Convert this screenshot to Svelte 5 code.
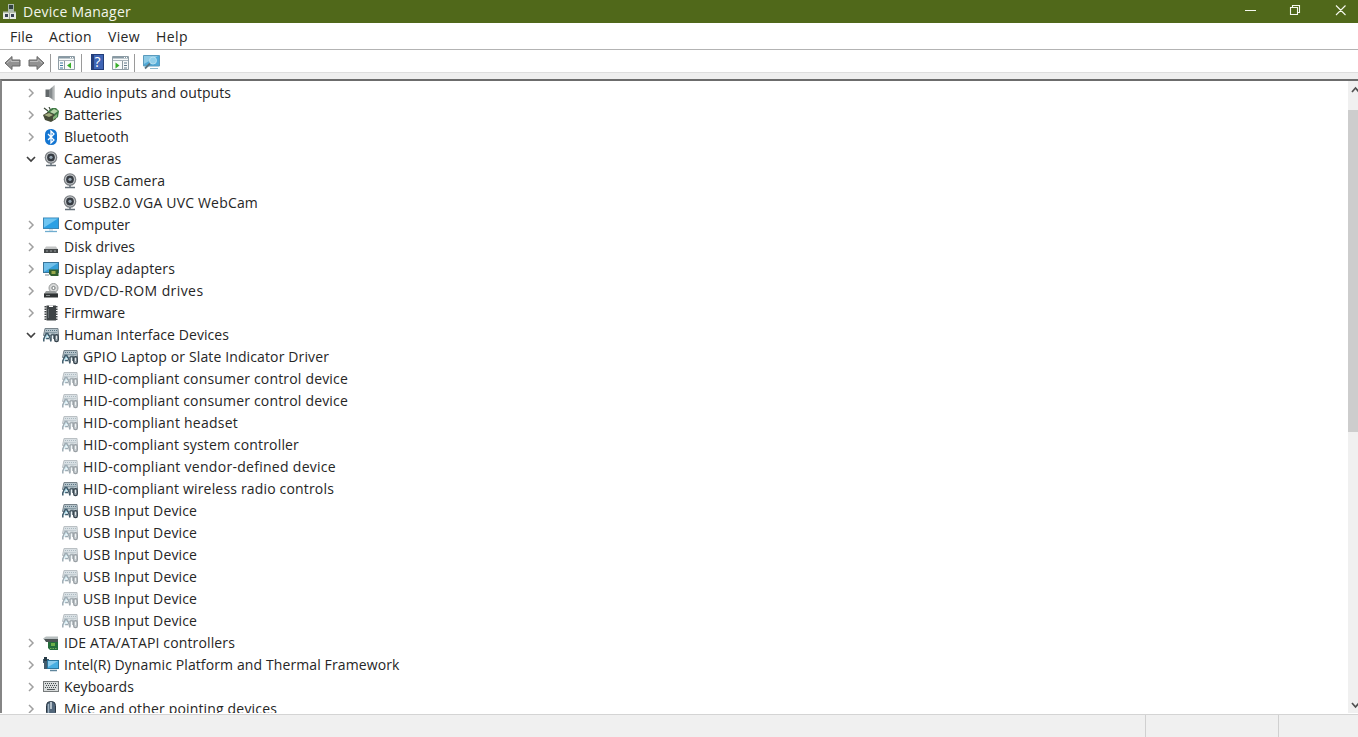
<script>
  const rows = [
    ['audio', 'Audio inputs and outputs', 167],
    ['battery', 'Batteries', 58],
    ['bluetooth', 'Bluetooth', 65],
    ['camera', 'Cameras', 57, 'open'],
    ['camera', 'USB Camera', 82, 'child'],
    ['camera', 'USB2.0 VGA UVC WebCam', 175, 'child'],
    ['computer', 'Computer', 66],
    ['disk', 'Disk drives', 71],
    ['display', 'Display adapters', 111],
    ['dvd', 'DVD/CD-ROM drives', 139.500],
    ['firmware', 'Firmware', 61],
    ['hid', 'Human Interface Devices', 165, 'open'],
    ['hid', 'GPIO Laptop or Slate Indicator Driver', 246, 'child'],
    ['hid', 'HID-compliant consumer control device', 265, 'child', true],
    ['hid', 'HID-compliant consumer control device', 265, 'child', true],
    ['hid', 'HID-compliant headset', 155, 'child', true],
    ['hid', 'HID-compliant system controller', 216, 'child', true],
    ['hid', 'HID-compliant vendor-defined device', 253, 'child', true],
    ['hid', 'HID-compliant wireless radio controls', 251, 'child'],
    ['hid', 'USB Input Device', 114, 'child'],
    ['hid', 'USB Input Device', 114, 'child', true],
    ['hid', 'USB Input Device', 114, 'child', true],
    ['hid', 'USB Input Device', 114, 'child', true],
    ['hid', 'USB Input Device', 114, 'child', true],
    ['hid', 'USB Input Device', 114, 'child', true],
    ['ide', 'IDE ATA/ATAPI controllers', 171],
    ['intel', 'Intel(R) Dynamic Platform and Thermal Framework', 335.500],
    ['keyboard', 'Keyboards', 70],
    ['mouse', 'Mice and other pointing devices', 213]
  ];
  const menus = [['File', 23], ['Action', 43], ['View', 32], ['Help', 32]];

  // Spreads the letters so that a label takes the given width.
  function fit(node, width) {
    const natural = node.getBoundingClientRect().width;
    node.style.letterSpacing = (width - natural) / node.textContent.length + 'px';
  }
</script>

{#snippet icon(name, faded)}
  <svg class="icon" class:faded viewBox="0 0 16 16">
    {#if name === 'audio'}
      <path d="M2.500 4.500h4v7.500h-4z" fill="#62686a" />
      <path d="M6 5l5.500-5v16l-5.500-4z" fill="#a2a6a7" />
      <path d="M6 5l3-2.500v11L6 12z" fill="#868b8d" />
      <path d="M11 1v14" stroke="#c6c9c9" />
    {:else if name === 'battery'}
      <path d="M1 1l4 3M6 0l2 4" stroke="#3d4a3b" stroke-width="1.200" />
      <path d="M4 5l5-4h4l3 3-1 6-4 3-6-1z" fill="#3f7a45" />
      <path d="M7 5l4-3 4 2-4 3z" fill="#b6d4a8" />
      <path d="M0 8l5-3 6 2 2 5-5 3-6-2z" fill="#454b38" />
      <path d="M1 8l5-2 4 2-4 2z" fill="#a2ac7d" />
      <path d="M10 10l4-3v3l-4 3z" fill="#82b479" />
    {:else if name === 'bluetooth'}
      <rect x="2" y="0" width="12" height="16" rx="5.500" fill="#1476d2" />
      <path d="M5 5l6 6-3 3V2l3 3-6 6" fill="none" stroke="#fff" stroke-width="1.300" />
    {:else if name === 'camera'}
      <circle cx="8" cy="6.500" r="6.300" fill="#7d8185" />
      <circle cx="8" cy="6.500" r="4.900" fill="#d3d7d9" />
      <circle cx="8" cy="6.500" r="3.900" fill="#363b42" />
      <circle cx="8" cy="6.300" r="1.600" fill="#94a4b0" />
      <path d="M8 12v2M3 14.500h10" stroke="#66717a" stroke-width="1.500" />
    {:else if name === 'computer'}
      <rect x="0.500" y="1" width="15" height="10.500" fill="#2ba0e4" stroke="#3a86b5" />
      <path d="M1 1.500h14L1 10.500z" fill="#6fc5f1" />
      <path d="M2 14.500h12" stroke="#6faccf" stroke-width="1.300" />
      <path d="M6 13h4" stroke="#a9c6d6" />
    {:else if name === 'disk'}
      <path d="M3 7.500h10l2 3H1z" fill="#c2c4c4" />
      <rect x="1" y="10" width="14" height="4" fill="#45494a" />
      <path d="M3 12h2M7 12h2M11 12h2" stroke="#9ba1a2" />
    {:else if name === 'display'}
      <rect x="0.500" y="1.500" width="15" height="10" fill="#369fd9" stroke="#39759a" />
      <path d="M1 2h14L1 11z" fill="#71c0ea" />
      <path d="M6 8.500h9.500V15H8l-2-2z" fill="#31602f" />
      <path d="M8.500 10h4v3h-4z" fill="#9aaa4d" />
      <path d="M2 14h4" stroke="#778591" />
    {:else if name === 'dvd'}
      <circle cx="10.500" cy="5" r="4.500" fill="#d8d9d9" stroke="#979a9a" />
      <circle cx="10.500" cy="5" r="1.600" fill="#fff" stroke="#727878" />
      <path d="M3 8h9l3 3H1z" fill="#999d9d" />
      <rect x="1" y="10.500" width="14" height="4" fill="#303435" />
      <path d="M3 12.500h4" stroke="#858c8c" />
    {:else if name === 'firmware'}
      <rect x="3.500" y="0.500" width="9.500" height="15" fill="#3d4245" />
      <path d="M2.500 1v14.500M13.500 1v14.500" stroke="#424649" stroke-width="2" stroke-dasharray="1.500 1" />
      <path d="M6 .5h4V2H6z" fill="#fff" />
      <path d="M5.500 4v9" stroke="#62696d" />
    {:else if name === 'hid'}
      <path d="M2 1.500h13l.5 7H.5z" fill="#b5c3ca" stroke="#77838a" />
      <path d="M3 3.500h11M2.500 5.500h11" stroke="#5c7785" stroke-dasharray="1 1" />
      <path d="M.8 14.500V12l2.400-5.500h1.600L7 11l1 3.500M3 11.500h3" fill="none" stroke="#3f5b6b" stroke-width="1.500" />
      <path d="M2.500 12l1.500-4 1.500 2" fill="none" stroke="#a8dced" />
      <path d="M8 13.500V9l1-1.500h2V12" fill="none" stroke="#52636e" stroke-width="1.600" />
      <path d="M9.500 8.500v3" stroke="#e8f3f6" />
      <rect x="11.700" y="7.700" width="3.600" height="7" rx="1.700" fill="#9facb3" stroke="#37444d" stroke-width="1.300" />
      <path d="M13.500 9v3" stroke="#e3e8eb" />
    {:else if name === 'ide'}
      <path d="M0 3.500l3-2h12v3H1z" fill="#b6bdbe" />
      <path d="M1 4h14v3H3z" fill="#4b5354" />
      <path d="M5 7h10v8H7l-2-2z" fill="#246d3b" />
      <path d="M8 8h4v3H8z" fill="#6eaf4a" />
      <path d="M7 13.500h7" stroke="#75ae57" stroke-dasharray="1.500 1" />
    {:else if name === 'intel'}
      <path d="M0 2h6v10H1V6H0z" fill="#415c6d" />
      <path d="M1 0h3v4H1z" fill="#253945" />
      <rect x="4.500" y="3.500" width="11" height="8" fill="#48aee1" stroke="#2d769e" />
      <path d="M5 4h10L5 10z" fill="#8ccced" />
      <path d="M7 13.500h7" stroke="#60869c" stroke-width="1.500" />
    {:else if name === 'keyboard'}
      <rect x="0.500" y="2.500" width="15" height="10" fill="#d9dcdc" stroke="#777b7c" />
      <path d="M2 4.500h12M3 6.500h11M2 8.500h12" stroke="#454c4f" stroke-dasharray="1 1" />
      <path d="M4 10.500h8" stroke="#555b5d" />
    {:else if name === 'mouse'}
      <rect x="3.500" y="0.500" width="9" height="15" rx="4" fill="#52677b" stroke="#2c3843" />
      <path d="M5.500 3v9" stroke="#a0b2c1" stroke-width="1.300" />
      <path d="M8 1v7" stroke="#d5dde2" stroke-width="1.500" />
    {/if}
  </svg>
{/snippet}

{#snippet panel(flip)}
  <svg class="tool panel" viewBox="0 0 17 16">
    <path d="M.5 1.500h16v13H.5z" fill="#f8fafa" stroke="#8f9da5" />
    <path d="M1 2.500h15" stroke="#8798a3" stroke-width="2" />
    <path d="M1 5.500h15" stroke="#a9b4bb" />
    <path d="M12 2.500h1M14 2.500h1" stroke="#fff" />
    {#if flip}
      <path d="M10.500 6v8" stroke="#8b999f" />
      <path d="M12 8h3M12 10.500h3M12 13h3" stroke="#617888" />
      <path d="M3.500 7.500l4 3-4 3z" fill="#36ae29" />
    {:else}
      <path d="M6.500 6v8" stroke="#8b999f" />
      <path d="M2 8h3M2 10.500h3M2 13h3" stroke="#3c769c" />
      <path d="M13 7.500l-4 3 4 3z" fill="#36ae29" />
    {/if}
  </svg>
{/snippet}

<div class="window">
  <header>
    <svg class="logo" viewBox="0 0 16 18">
      <path d="M6 1h6v8H6z" fill="#a9b7ab" />
      <path d="M7 2h4v4H7z" fill="#344442" />
      <path d="M1 8.500h13v3H1z" fill="#b5bfae" />
      <path d="M1 10h13v6H1z" fill="#e5e9e3" />
      <path d="M3 11h3v3H3zM9 11h3v3H9z" fill="#374153" />
      <path d="M7.500 10v6" stroke="#9aa49a" />
    </svg>
    <span class="title"><span use:fit={108}>Device Manager</span></span>
    <svg class="controls" viewBox="0 0 113 22">
      <path d="M5 10.500h11M50.500 7.500h7v7h-7zM52.500 7.500v-2h7v7h-2M96 5.500l9.500 9.500M105.500 5.500L96 15" fill="none" stroke="#f5f8ee" stroke-width="1.100" />
    </svg>
  </header>
  <nav>
    {#each menus as [label, width]}
      <span class="menu" style:width="{width}px"><span use:fit={width}>{label}</span></span>
    {/each}
  </nav>
  <div class="toolbar">
    <svg class="tool arrow" viewBox="0 0 17 16">
      <path d="M1 8l7-6.500V5h8v6H8v3.500z" fill="#929292" stroke="#666" />
      <path d="M3 8l4-3.500V6.500h8" fill="none" stroke="#bcbcbc" />
    </svg>
    <svg class="tool arrow next" viewBox="0 0 17 16">
      <path d="M16 8L9 1.500V5H1v6h8v3.500z" fill="#929292" stroke="#666" />
      <path d="M2 6.500h8V4.500L14 8" fill="none" stroke="#bcbcbc" />
    </svg>
    <i class="divider first"></i>
    {@render panel(false)}
    <i class="divider second"></i>
    <span class="help">?</span>
    {@render panel(true)}
    <i class="divider third"></i>
    <svg class="tool scan" viewBox="0 0 17 16">
      <path d="M.5 .5h16v10.500H.5z" fill="#4fa9d7" stroke="#5a9bbd" />
      <path d="M1 1h14L1 9z" fill="#8dcae6" />
      <circle cx="10" cy="5.500" r="3.500" fill="#91cfea" stroke="#b5dfef" />
      <path d="M7 8.500l-5 5" stroke="#5b737f" stroke-width="1.800" />
      <path d="M7 13.500h8" stroke="#8bb8cc" />
    </svg>
  </div>
  <main>
    <div class="tree">
      {#each rows as [name, label, width, state, faded]}
        <div class="row" class:child={state === 'child'}>
          {#if state !== 'child'}
            <svg class="chevron" viewBox="0 0 10 10">
              {#if state === 'open'}
                <path d="M1 3l4 4 4-4" fill="none" stroke="#404040" stroke-width="1.700" />
              {:else}
                <path d="M3 1l4 4-4 4" fill="none" stroke="#a0a0a0" stroke-width="1.500" />
              {/if}
            </svg>
          {/if}
          {@render icon(name, faded)}
          <span class="label"><span use:fit={width}>{label}</span></span>
        </div>
      {/each}
    </div>
    <div class="scroll">
      <svg viewBox="0 0 10 29"><path d="M4 11l3.500-4L11 11" fill="none" stroke="#505050" stroke-width="1.700" /></svg>
      <div class="thumb"></div>
      <svg class="down" viewBox="0 0 10 18"><path d="M4 8l3.500 4L11 8" fill="none" stroke="#505050" stroke-width="1.700" /></svg>
    </div>
  </main>
  <footer><i></i><i></i><i></i></footer>
</div>

<style>
  :global(body) { margin: 0; overflow: hidden; }
  .window { width: 1358px; height: 737px; display: flex; flex-direction: column; overflow: hidden; background: #fff; color: #262626; font-family: "Open Sans", "Noto Sans", sans-serif; font-size: 14px; }
  span { white-space: nowrap; }
  svg { display: block; flex: none; }
  header { height: 23px; box-sizing: border-box; display: flex; align-items: center; background: #50681a; color: #f3f5eb; }
  .logo { width: 16px; height: 18px; margin-left: 2px; }
  .title { margin-left: 5px; padding-bottom: 1px; }
  .controls { width: 113px; height: 22px; margin-left: auto; margin-right: 5px; margin-bottom: 2px; }
  nav { height: 26px; display: flex; align-items: center; gap: 16px; padding-left: 10px; border-bottom: 1px solid #b3b3b3; }
  .toolbar { height: 22px; display: flex; align-items: center; padding: 0 4px; border-bottom: 1px solid #dedede; }
  .tool { width: 17px; height: 16px; margin-top: 3px; }
  .next { margin-left: 7px; }
  .divider { width: 1px; height: 18px; background: #9a9a9a; margin-top: 3px; }
  .first { margin-left: 5px; margin-right: 7px; }
  .second { margin-left: 6px; margin-right: 9px; }
  .third { margin-left: 5px; margin-right: 8px; }
  .help { width: 13px; height: 16px; margin: 2px 8px 0 0; border: 1px solid #223d79; box-sizing: border-box; background: linear-gradient(90deg, #263f7b 0 2px, #3f65b5 2px); color: #fff; text-align: center; font: 14px/14px "Open Sans", sans-serif; }
  main { height: 634px; display: flex; border-top: 2px solid #6c6c6c; border-left: 2px solid #858585; box-sizing: border-box; margin-top: 6px; position: relative; }
  main::before { content: ""; position: absolute; left: -2px; right: 0; top: -8px; height: 6px; background: #efefef; }
  .tree { flex: 1; overflow: hidden; padding-top: 1px; }
  .row { height: 22px; display: flex; align-items: center; padding-left: 24px; }
  .row.child { padding-left: 60px; }
  .chevron { width: 10px; height: 10px; margin-right: 7px; }
  .icon { width: 16px; height: 16px; }
  .faded { opacity: .5; }
  .label { margin-left: 5px; line-height: 22px; }
  .scroll { width: 10px; display: flex; flex-direction: column; background: #f0f0f0; }
  .scroll svg { width: 10px; height: 29px; }
  .thumb { height: 322px; background: #cdcdcd; }
  .scroll .down { height: 18px; margin-top: auto; }
  footer { flex: 1; box-sizing: border-box; border-top: 1px solid #d4d4d4; margin-top: 1px; background: #f0f0f0; display: grid; grid-template-columns: 1145px 133px 1fr; }
  footer i + i { border-left: 1px solid #d0d0d0; }
</style>
